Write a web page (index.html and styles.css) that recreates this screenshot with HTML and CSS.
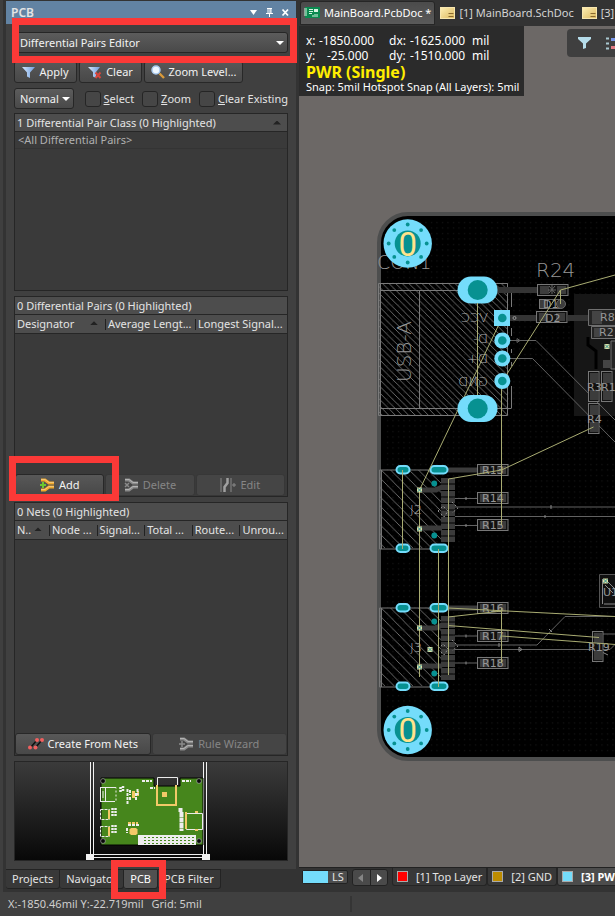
FILE: index.html
```
<!DOCTYPE html>
<html lang="en">
<head>
<meta charset="utf-8">
<title>MainBoard.PcbDoc</title>
<link rel="stylesheet" href="styles.css">
</head>
<body>
<svg class="defs" width="0" height="0" aria-hidden="true">
  <defs>
    <linearGradient id="blueFunnel" x1="0" x2="1"><stop offset="0" stop-color="#d4e6fb"/><stop offset="1" stop-color="#6f9fe0"/></linearGradient>
    <linearGradient id="note" x1="0" y1="0" x2="1" y2="1"><stop offset="0" stop-color="#fdeeb4"/><stop offset="1" stop-color="#dcb95e"/></linearGradient>
    <symbol id="pair" viewBox="0 0 15 14">
      <path d="M1 2h4l4 3h5M1 12h4l4-3h5" fill="none" stroke="currentColor" stroke-width="3"/>
      <path d="M1 1.500h4l4 3h5M1 11.500h4l4-3h5" fill="none" stroke="#fff" stroke-opacity=".35" stroke-width="1"/>
    </symbol>
    <symbol id="sheet" viewBox="0 0 15 12">
      <rect x=".5" y=".5" width="14" height="11" fill="url(#note)" stroke="#f7e6ae"/>
      <path d="M8.500 6.500h5M8.500 9.500h5" stroke="#8a6a30" fill="none"/>
    </symbol>
  </defs>
</svg>
<div class="app">
  <main class="work">
    <aside class="dock">
      <section class="panel">
        <header class="title">
          <h1>PCB</h1>
          <button class="cap" aria-label="Menu"><svg width="9" height="9" viewBox="0 0 9 9"><path d="M1 2h7L4.500 7z" fill="#fff"/></svg></button>
          <button class="cap" aria-label="Pin"><svg width="9" height="9" viewBox="0 0 9 9"><path d="M2 .5h5M3 0v5M6 0v5M5 0v5M1 5.500h7M4.500 6v3" stroke="#fff" fill="none"/></svg></button>
          <button class="cap" aria-label="Close"><svg width="9" height="9" viewBox="0 0 9 9"><path d="M1.500 1.500l5.500 6M7 1.500l-5.500 6" stroke="#fff" stroke-width="1.800"/></svg></button>
        </header>
        <div class="content">
          <select class="drop mode" aria-label="Panel mode"><option>Differential Pairs Editor</option></select>
          <div class="buttons">
            <button class="btn apply"><svg width="13" height="12" viewBox="0 0 13 12"><path d="M0 1h13L8 6.500V12L5 10.500V6.500z" fill="url(#blueFunnel)"/></svg>Apply</button>
            <button class="btn clear"><svg width="14" height="13" viewBox="0 0 14 13"><path d="M0 1h12L8 6v6L5 10.500V6z" fill="url(#blueFunnel)"/><path d="M7.500 6.500l5 5.500M12.500 6.500l-5 5.500" stroke="#d8453c" stroke-width="2"/></svg>Clear</button>
            <button class="btn zoomlevel"><svg width="14" height="14" viewBox="0 0 14 14"><path d="M8.500 8.500L13 13" stroke="#d99a3a" stroke-width="2.400"/><circle cx="5" cy="5" r="4" fill="#eef7ff" stroke="#a9c9ee" stroke-width="1.500"/></svg>Zoom Level...</button>
          </div>
          <div class="options">
            <select class="drop" aria-label="Highlight"><option>Normal</option></select>
            <label><input type="checkbox"><span><u>S</u>elect</span></label>
            <label><input type="checkbox"><span><u>Z</u>oom</span></label>
            <label><input type="checkbox"><span><u>C</u>lear Existing</span></label>
          </div>
          <section class="list classes">
            <h2>1 Differential Pair Class (0 Highlighted)<i class="up"></i></h2>
            <p class="row">&lt;All Differential Pairs&gt;</p>
          </section>
          <section class="list pairs">
            <h2>0 Differential Pairs (0 Highlighted)</h2>
            <table><thead><tr><th class="w3">Designator<i class="up"></i></th><th class="w3">Average Lengt...</th><th>Longest Signal...</th></tr></thead></table>
            <div class="actions three">
              <button class="btn"><svg class="gold" width="15" height="14"><use href="#pair"/><path d="M0 7h6M3 4v6" stroke="#6ac52f" stroke-width="2"/></svg>Add</button>
              <button class="btn off" disabled><svg width="15" height="14"><use href="#pair"/><path d="M1 5l4 4M5 5l-4 4" stroke="#8a8a8a" stroke-width="1.500"/></svg>Delete</button>
              <button class="btn off" disabled><svg width="16" height="14" viewBox="0 0 16 14"><path d="M1 0v14M11 0v14M12 7h4M14 5v4" stroke="#8a8a8a" fill="none"/><path d="M7.500 0v5l-3 4v5" stroke="#a0a0a0" stroke-width="2.500" fill="none"/></svg>Edit</button>
            </div>
          </section>
          <section class="list nets">
            <h2>0 Nets (0 Highlighted)</h2>
            <table><thead><tr><th class="n">N..<i class="up"></i></th><th>Node ...</th><th>Signal...</th><th>Total ...</th><th>Route...</th><th>Unrou...</th></tr></thead></table>
            <div class="actions two">
              <button class="btn"><svg width="16" height="12" viewBox="0 0 16 12"><path d="M3 9l6-7M8 9l6-7" stroke="#111" stroke-width="1.500"/><g fill="#f0605f"><circle cx="9" cy="2" r="2"/><circle cx="14" cy="2" r="2"/><circle cx="2" cy="9.500" r="2"/><circle cx="7.500" cy="9.500" r="2"/></g></svg>Create From Nets</button>
              <button class="btn off" disabled><svg width="15" height="14"><use href="#pair"/><path d="M0 7h6M3 4v6" stroke="#8a8a8a" stroke-width="1.500"/></svg>Rule Wizard</button>
            </div>
          </section>
          <div class="preview">
            <svg viewBox="15 762 272 98" preserveAspectRatio="xMidYMid meet" role="img" aria-label="Board overview">
              <g fill="none" stroke="#f2f2f2"><path d="M90.500 762v94M93.500 762v92.500h110V762M206.500 762v96M90.500 857.500h116"/></g>
              <path d="M86 854h8v6h-8zM202 854h8v6h-8z" fill="#f2f2f2"/>
              <path d="M101 778h53v8h26v-8h23v67H101z" fill="#46861c" stroke="#000"/>
              <g fill="#080808" stroke="#bbb" stroke-width=".6"><circle cx="103" cy="781" r="2.400"/><circle cx="199" cy="781" r="2.400"/><circle cx="103" cy="841" r="2.400"/><circle cx="199" cy="841" r="2.400"/></g>
              <g fill="none" stroke="#eee"><path d="M157.500 785V777.500h20V785M101 787.500h14M101 801.500h14M100.500 787v15M105.500 787v15M103 791v7"/><path d="M100.500 809.500h9v10h-9zM100.500 826.500h9v10h-9z" stroke-dasharray="3 1"/><path d="M111 787.500h5v14h-5" stroke-dasharray="2 2"/><path d="M186.500 813.500h16v16h-16z"/></g>
              <g stroke="#f3c968" fill="none" stroke-width="2"><path d="M157 785v20h19v-20M109 810v9M109 827v9M186 812v17"/><path d="M195 812h3M195 830h3M128 823h10" stroke-dasharray="3 1"/></g>
              <g fill="#f3c968"><path d="M162 792h5v5h-5z"/><path d="M131 828h5l1.500 1.500v4L136 835h-5l-1.500-1.500v-4z"/><path d="M132 791h3v7h-3zM137 791h2v5h-2z"/></g>
              <g stroke="#eee" fill="none"><path d="M120.500 787v5M123 786v6M112.500 808v9M115.500 808v9M112.500 825v9M115.500 825v9" stroke-width="2.500" stroke-dasharray="2 1"/><path d="M127.500 789v16M130 790v5M130 797v4M136 793v7M137.500 789v6M142 781h10M150 788h5M182 781h9M127 828v5M128 825h11" stroke-width="2" stroke-dasharray="3 1"/><path d="M180.500 808v4M181.500 812v19" stroke-width="4" stroke-dasharray="5 .5"/></g>
              <path d="M138 835h58v10h-58z" fill="#eee"/><path d="M144 837.500h50M144 840.500h50M144 843.500h50" stroke="#46861c" stroke-dasharray="2 2"/>
            </svg>
          </div>
        </div>
      </section>
      <nav class="docktabs">
        <a href="#projects">Projects</a><a href="#navigator">Navigator</a><a href="#pcb" class="on">PCB</a><a href="#filter">PCB Filter</a>
      </nav>
      <div class="mark m1"></div><div class="mark m2"></div><div class="mark m3"></div>
    </aside>

    <section class="editor">
      <nav class="doctabs">
        <a href="#pcbdoc" class="on"><svg width="16" height="12" viewBox="0 0 16 12"><path d="M1 0h15v11H1z" fill="#0b8a50"/><path d="M0 2h3M0 4h3M0 6h3M0 8h3M5 2.500h4M5 4.500h4M5 6.500h3M11 10v-3M13 10v-3M9 10V8" stroke="#d7f5e2"/><path d="M10 2h4v3h-4z" fill="#d7f5e2"/></svg>MainBoard.PcbDoc *</a>
        <a href="#sch1"><svg width="15" height="12"><use href="#sheet"/></svg>[1] MainBoard.SchDoc</a>
        <a href="#sch3"><svg width="15" height="12"><use href="#sheet"/></svg>[3] MainBoard.SchDoc</a>
      </nav>
      <div class="canvas">
        <svg class="board" viewBox="299 26 316 841" preserveAspectRatio="xMinYMin slice" role="img" aria-label="Circuit board">
          <defs>
            <pattern id="dots" width="5.500" height="5.500" patternUnits="userSpaceOnUse"><path d="M2 2h1v1H2z" fill="#202020"/></pattern>
            <pattern id="h1" width="6.600" height="6.600" patternUnits="userSpaceOnUse"><path d="M-1-1l8.600 8.600" stroke="#747474" stroke-width=".9"/></pattern>
            <pattern id="h2" width="9.300" height="9.300" patternUnits="userSpaceOnUse"><path d="M-1-1l11.300 11.300" stroke="#747474" stroke-width=".9"/></pattern>
            <g id="ring"><circle r="24.200" fill="#74dcfb"/><circle r="13" fill="#079191"/><g fill="#079191"><circle cy="-19" r="1.900"/><circle cy="19" r="1.900"/><circle cx="-19" r="1.900"/><circle cx="19" r="1.900"/><circle cx="-13.400" cy="-13.400" r="1.900"/><circle cx="13.400" cy="-13.400" r="1.900"/><circle cx="-13.400" cy="13.400" r="1.900"/><circle cx="13.400" cy="13.400" r="1.900"/></g><text class="zero" y="12" text-anchor="middle">0</text></g>
            <g id="res"><rect x=".5" y=".5" width="30.500" height="11" fill="#111" stroke="#777"/><path d="M3 2h9v8H3zM20 2h9v8h-9z" fill="#3c3c3c"/></g>
            <g id="resv"><rect x=".5" y=".5" width="10.500" height="30" fill="#111" stroke="#777"/><path d="M2 2h8v10H2zM2 19h8v10H2z" fill="#3c3c3c"/></g>
            <g id="conn">
              <path d="M380 0h61v78h-61z" fill="url(#h2)"/>
              <path d="M448.500 0H379.500v79h69M381.500 0v79" fill="none" stroke="#777"/>
              <g stroke="#3b3b3b"><path d="M448 0h29M420 20h16l6-3M420 58h22" stroke-width="5"/><path d="M448 8v64" stroke-width="14" stroke-dasharray="5.500 1"/></g>
              <g fill="#079191" stroke="#74dcfb" stroke-width="2"><rect x="396.500" y="-4" width="13" height="7.500" rx="3.700"/><rect x="430.500" y="-4" width="17" height="7.500" rx="3.700"/><rect x="396.500" y="74.500" width="13" height="7.500" rx="3.700"/><rect x="430.500" y="74.500" width="17" height="7.500" rx="3.700"/></g>
              <g fill="#079191"><circle cx="434.300" cy="13.500" r="2.900"/><circle cx="434.300" cy="65.500" r="2.900"/></g>
              <g stroke="#909090" fill="none" stroke-dasharray="2 2"><path d="M438 41l5-5 5 5-4 6zM452 32l6 6-6 5"/></g>
            </g>
            <g id="mk"><path d="M-2.500-2.500h5v5h-5z" fill="#dfe0a4"/><path d="M-2-2l4 4M2-2l-4 4" stroke="#2f8f95"/></g>
          </defs>
          <rect x="379" y="214" width="300" height="545" rx="29" fill="#000" stroke="#4d4e4e" stroke-width="4"/>
          <rect x="383" y="218" width="296" height="537" rx="25" fill="url(#dots)"/>
          <path d="M574 294h41v122h-41z" fill="#161616"/>
          <path d="M588 337v8l8 6v18" fill="none" stroke="#000" stroke-width="3"/>

          <path d="M378 283h130v132H378z" fill="url(#h1)"/>
          <g fill="none" stroke="#7a7a7a"><path d="M378.500 283.500h129v132h-129zM380.500 283v132M419.500 290v118"/><path d="M380 290.500h131.500M380 408.500h131.500"/><path d="M511.500 290v17M511.500 328v8M511.500 349v4M511.500 362v4M511.500 386v22"/></g>
          <g stroke="#343434" stroke-width="6"><path d="M495 290h42M510 318h27M568 318h22"/></g>
          <g stroke="#626262" fill="none"><path d="M510 340.500h26L615 420M510 358.500h22.500L615 442M517 338.500l3 2-3 2zM455 498.500h22M455 525.500h22M455 507h160M455 516.500h160M455 636h22M455 663h22M455 645h82l28-28.500h50M455 649.500h155l5-5M603 634h12"/>
            <path d="M466 497v3M466 524v3M551 505v4M545 515v3M466 634.500v3M466 661.500v3M499 643v4M519 647l3 2.500-3 2zM549 629l3 3M602 652l6 3" stroke="#8a8a8a"/></g>
          <circle cx="514.500" cy="318" r="1.500" fill="none" stroke="#999"/>
          <g class="silk">
            <text x="377" y="269" class="s19">CON1</text>
            <text x="536" y="277" class="s20">R24</text>
            <text transform="translate(411 382) rotate(-90)" class="s20">USB-A</text>
            <g class="s13"><text transform="translate(488 322) scale(-1 1)">VCC</text><text transform="translate(488 343) scale(-1 1)">D-</text><text transform="translate(488 363) scale(-1 1)">D+</text><text transform="translate(488 386) scale(-1 1)">GND</text></g>
          </g>

          <use href="#res" x="537" y="284"/><path d="M549 286l6 7M555 286l-6 7M552 285v9M548 290h8" stroke="#666"/>
          <rect x="539.500" y="299.500" width="8" height="9" fill="#3c3c3c" stroke="#777"/><circle cx="561" cy="304" r="4.500" fill="#3c3c3c" stroke="#666"/><path d="M546 299.500h14M546 308.500h14" stroke="#666"/>
          <use href="#res" x="536" y="311"/>
          <path d="M588.500 309.500h30v16h-30zM591.500 326.500h25v12h-25zM611 341h5v28h-5z" fill="#242424" stroke="#707070"/>
          <path d="M592 311h10v13h-10zM594 328h6v9h-6zM603 360h7v8h-7z" fill="#444"/>
          <use href="#resv" x="588" y="371"/><use href="#resv" x="601" y="371"/><use href="#resv" x="588" y="403"/>
          <use href="#conn" y="470"/><use href="#conn" y="608"/>
          <use href="#res" x="477" y="464"/><use href="#res" x="477" y="492"/><use href="#res" x="477" y="519"/>
          <use href="#res" x="477" y="602"/><use href="#res" x="477" y="630"/><use href="#res" x="477" y="657"/>
          <use href="#resv" x="592" y="631"/>
          <path d="M599.500 574.500h20v33h-20z" fill="#101010" stroke="#555"/><path d="M602.500 579v25M604 604h11M605 579l10 10M605 585l8 8" stroke="#888"/>
          <g class="silk s11">
            <text x="543" y="308">D1</text><text x="545" y="322">D2</text><text x="600" y="321">R8</text><text x="599" y="336">R2</text>
            <text x="587" y="391">R3</text><text x="601" y="391">R1</text><text x="587" y="423">R4</text>
            <text x="482" y="474">R13</text><text x="482" y="502">R14</text><text x="482" y="529">R15</text>
            <text x="482" y="612">R16</text><text x="482" y="640">R17</text><text x="482" y="667">R18</text>
            <text x="588" y="651">R19</text><text x="603" y="596">U1</text>
          </g>
          <g class="silk s13"><text x="410" y="514">J2</text><text x="410" y="652">J3</text></g>
          <g stroke="#a9ac72" fill="none" stroke-width="1">
            <path d="M560.500 304v-14L615 275M560.500 290L502.500 381M502 318L419.500 490M501.500 381v144M448.500 479l53-9 92-43"/>
            <path d="M402.500 470v79M419.500 490v187M438.500 549v138M448.500 479v196"/>
            <path d="M448 608l167 8.500M448 617l54-6M448 625.500l151 12M501.500 636l114 8.500M501.500 608v55"/>
          </g>
          <use href="#mk" x="607" y="346.500"/><use href="#mk" x="419.500" y="490"/><use href="#mk" x="419.500" y="529"/><use href="#mk" x="419.500" y="628"/><use href="#mk" x="430" y="649.500"/><use href="#mk" x="419.500" y="667"/><use href="#mk" x="605.500" y="581"/>
          <g fill="#74dcfb"><rect x="457.500" y="276.500" width="40" height="27" rx="13.500"/><rect x="457.500" y="395" width="40" height="27" rx="13.500"/><path d="M494 310h16v16h-16z"/><circle cx="502.300" cy="340.500" r="8"/><circle cx="502.300" cy="358.500" r="8"/><circle cx="502.300" cy="381" r="8"/></g>
          <g fill="#079191"><circle cx="477.700" cy="290" r="10"/><circle cx="477.700" cy="408.500" r="10"/><circle cx="502.300" cy="318" r="4.300"/><circle cx="502.300" cy="340.500" r="4.300"/><circle cx="502.300" cy="358.500" r="4.300"/><circle cx="502.300" cy="381" r="4.300"/></g>
          <path d="M477.500 303v92" stroke="#a9ac72"/>
          <use href="#ring" x="407.700" y="243.500"/><use href="#ring" x="407.700" y="730"/>
        </svg>
        <div class="hud">
          <dl><dt>x:</dt><dd>-1850.000</dd><dt>dx:</dt><dd>-1625.000</dd><dd>mil</dd><dt>y:</dt><dd class="short">-25.000</dd><dt>dy:</dt><dd>-1510.000</dd><dd>mil</dd></dl>
          <strong>PWR (Single)</strong>
          <p>Snap: 5mil Hotspot Snap (All Layers): 5mil</p>
        </div>
        <div class="tools">
          <button class="cap" aria-label="Filter"><svg width="13" height="12" viewBox="0 0 13 12"><path d="M0 0h13v2L8 6.500V11L5 12V6.500L0 2z" fill="#b5dcea"/></svg></button>
          <button class="cap" aria-label="Layers"><svg width="14" height="13" viewBox="0 0 14 13"><path d="M0 1.500h3M0 6.500h3M0 11.500h3" stroke="#a9c8d0" stroke-width="2"/><path d="M5 2.500h9" stroke="#7795e8" stroke-width="3"/><path d="M5 10.500h9" stroke="#e07a83" stroke-width="3"/></svg></button>
        </div>
      </div>
      <footer class="layers">
        <button class="ls"><i></i>LS</button>
        <div class="arrows"><button aria-label="Previous layer" class="dim"><svg width="6" height="8"><path d="M5 0v8L0 4z" fill="#858585"/></svg></button><button aria-label="Next layer"><svg width="6" height="8"><path d="M1 0v8l5-4z" fill="#fff"/></svg></button></div>
        <a href="#l1"><i class="red"></i>[1] Top Layer</a><a href="#l2"><i class="ochre"></i>[2] GND</a><a href="#l3" class="on"><i class="cyan"></i>[3] PWR</a>
      </footer>
    </section>
  </main>
  <footer class="status"><p><span>X:-1850.46mil Y:-22.719mil</span><span>Grid: 5mil</span></p></footer>
</div>
</body>
</html>
```
FILE: styles.css
```
* { box-sizing: border-box; margin: 0; padding: 0; }
body { background: #333; color: #e4e4e4; font: 11px/16px "Noto Sans", "Open Sans", sans-serif; overflow: hidden; }
button, select, input { font: inherit; color: inherit; }
a { color: inherit; text-decoration: none; }
i { font-style: normal; }
svg { display: block; flex: none; }
.defs { position: absolute; }

.app { display: flex; flex-direction: column; height: 100vh; }
.work { flex: 1; min-height: 0; display: grid; grid-template-columns: 296px minmax(0, 1fr); gap: 3px; }

/* Docked panel */
.dock { position: relative; display: flex; flex-direction: column; border-left: 3px solid #3f3f3f; padding: 1px 0 3px 3px; }
.panel { flex: 1; min-height: 0; display: flex; flex-direction: column; background: #404040; }
.title { display: flex; align-items: center; gap: 7px; height: 23px; padding: 0 6px 0 5px; background: #6283a3; }
.title h1 { flex: 1; font-size: 12px; font-weight: 600; }
.cap { display: flex; background: none; border: 0; }
.content { flex: 1; min-height: 0; display: flex; flex-direction: column; padding: 8px; }

.drop {
  appearance: none; height: 21px; padding: 0 5px; border: 1px solid #262626; border-radius: 3px; color: #f2f2f2;
  background:
    linear-gradient(to top left, transparent 48%, #fff 52%) no-repeat right 3px center / 4px 4px,
    linear-gradient(to top right, transparent 48%, #fff 52%) no-repeat right 7px center / 4px 4px,
    linear-gradient(#5c5c5c, #494949);
}
.mode { width: 100%; flex: none; }
.buttons { display: flex; gap: 2px; margin: 8px 0 5px; }
.btn { display: flex; align-items: center; justify-content: center; gap: 4px; height: 22px; border: 1px solid #282828; border-radius: 3px; background: linear-gradient(#585858, #484848); color: #f2f2f2; white-space: nowrap; }
.off { background: #454545; border-color: #373737; color: #868686; }
.apply, .clear { width: 63px; }
.zoomlevel { width: 99px; }
.options { display: flex; align-items: center; gap: 8px; height: 21px; margin-bottom: 4px; white-space: nowrap; }
.options .drop { width: 65px; margin-right: 3px; }
.options label { display: flex; align-items: center; gap: 3px; }
.options input { appearance: none; width: 16px; height: 16px; border: 1px solid #252525; border-radius: 3px; background: #464646; }

.list { display: flex; flex-direction: column; border: 1px solid #262626; background: #3a3a3a; margin-bottom: 5px; }
.list h2 { display: flex; justify-content: space-between; align-items: center; height: 18px; padding: 0 6px 0 2px; border-bottom: 1px solid #262626; background: #4d4d4d; font-size: 11px; font-weight: 400; }
.up { width: 8px; height: 4px; background: #222; clip-path: polygon(50% 0, 100% 100%, 0 100%); }
.row { padding: 0 3px; color: #b0b0b0; border-bottom: 1px solid #343434; }
.classes { flex: 178; }
.pairs { flex: 201; }
.nets { flex: 254; }
table { width: 100%; border-collapse: collapse; table-layout: fixed; background: #4d4d4d; }
th { position: relative; height: 18px; padding: 0 2px; border-bottom: 1px solid #262626; font-weight: 400; text-align: left; white-space: nowrap; }
th + th::before { content: ""; position: absolute; left: 0; top: 4px; bottom: 3px; width: 1px; background: #222; }
th + th { padding-left: 3px; }
th .up { position: absolute; right: 7px; top: 6px; }
.w3 { width: 90px; }
.n { width: 34px; }
.actions { display: grid; gap: 1px; margin-top: auto; }
.three { grid-template-columns: 1fr 1fr 1fr; padding-right: 2px; }
.two { grid-template-columns: 1fr 1fr; }
.gold { color: #f0a92c; }
.off svg { color: #8a8a8a; }
.preview { flex: 99; min-height: 0; border: 1px solid #262626; background: linear-gradient(#3b3b3b, #080808); }
.preview svg { width: 100%; height: 100%; }

.docktabs { display: flex; }
.docktabs a { height: 20px; padding: 1px 6px; border: 1px solid #232323; border-left-width: 0; border-radius: 0 0 3px 3px; background: #383838; }
.docktabs a.on { background: #505050; color: #fff; }

/* Callouts */
.mark { position: absolute; border: 7px solid #fb3937; pointer-events: none; }
.m1 { left: 9px; top: 18px; width: 285px; height: 45px; }
.m2 { left: 6px; top: 456px; width: 110px; height: 45px; }
.m3 { left: 108px; bottom: -7px; width: 55px; height: 39px; }

/* Editor */
.editor { display: flex; flex-direction: column; min-width: 0; overflow: hidden; }
.doctabs { display: flex; gap: 2px; height: 26px; padding: 1px 0 1px 1px; white-space: nowrap; }
.doctabs a { display: flex; align-items: center; gap: 4px; padding: 0 3px; color: #d4d4d4; }
.doctabs .on { background: linear-gradient(#4b4b4b, #5a5a5a); border: 1px solid #262626; border-radius: 3px 3px 0 0; color: #fff; }
.canvas { position: relative; flex: 1; min-height: 0; overflow: hidden; background: #6c6866; }
.board { width: 100%; height: 100%; }
.silk { font-family: "DejaVu Sans", sans-serif; font-weight: 200; fill: #969696; }
.s11 { font-size: 11px; font-weight: 400; }
.s13 { font-size: 13px; fill: #b0b0b0; }
.s19 { font-size: 19px; }
.s20 { font-size: 20px; }
.zero { font: 33px "Liberation Sans Narrow", Roboto, sans-serif; fill: #ffe38c; }
.hud { position: absolute; left: 0; top: 0; width: 225px; height: 70px; padding: 7px; background: #2b2b2b; color: #fff; white-space: nowrap; }
.hud dl { display: grid; grid-template-columns: 13px 70px 21px 62px 20px; font-size: 12px; line-height: 15px; }
.hud .short { padding-left: 8px; }
.hud strong { display: block; color: #ffee00; font-size: 16px; line-height: 18px; }
.hud p { line-height: 12px; }
.tools { position: absolute; right: 0; top: 3px; display: flex; align-items: center; gap: 15px; width: 48px; height: 28px; padding-left: 11px; border-radius: 4px 0 0 4px; background: #3f3f3f; }
.layers { display: flex; height: 25px; padding: 0 0 6px 3px; border-top: 1px solid #222; white-space: nowrap; }
.layers a { flex: none; display: flex; align-items: center; gap: 8px; padding: 0 4px; border: 1px solid #252525; border-top: 0; border-radius: 0 0 3px 3px; background: #383838; }
.layers .on { background: #4c4c4c; color: #fff; font-weight: 700; }
.layers a i { width: 11px; height: 11px; border: 1px solid #aaa; }
.red { background: #f00; }
.ochre { background: #bd8c00; }
.cyan { background: #74dcfb; }
.ls { flex: none; display: flex; align-items: center; gap: 4px; width: 46px; height: 14px; margin-top: 2px; border: 1px solid #222; border-radius: 2px; background: #4d4d4d; }
.ls i { width: 25px; height: 12px; background: #74dcfb; }
.arrows { flex: none; display: flex; width: 36px; margin: 1px 4px 0; border: 1px solid #222; border-radius: 3px; background: #4a4a4a; }
.arrows button { flex: 1; display: flex; align-items: center; justify-content: center; background: none; border: 0; }
.arrows .dim { border-right: 1px solid #222; }

.status { height: 24px; padding: 4px 8px; background: #404040; color: #cfcfcf; }
.status p { display: flex; gap: 8px; width: 344px; border-right: 2px solid #353535; }
```
